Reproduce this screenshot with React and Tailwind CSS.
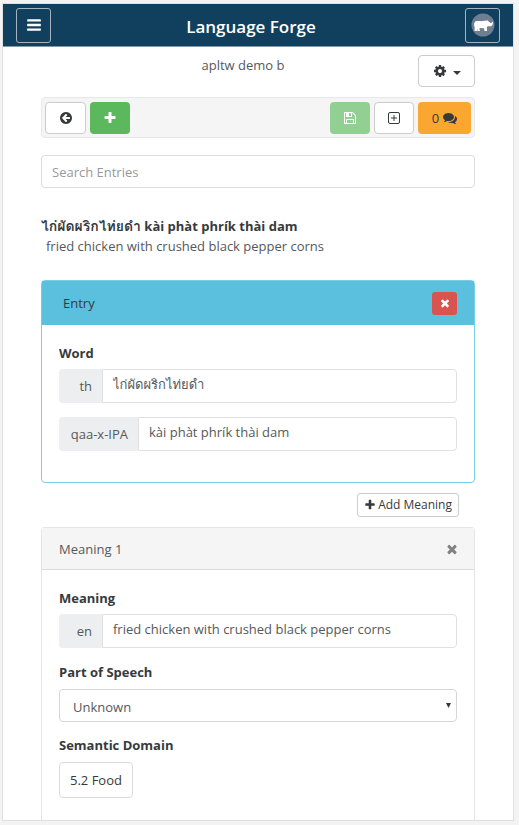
const ICONS = {
  plus: "M1600 736v192q0 40-28 68t-68 28h-416v416q0 40-28 68t-68 28h-192q-40 0-68-28t-28-68v-416h-416q-40 0-68-28t-28-68v-192q0-40 28-68t68-28h416v-416q0-40 28-68t68-28h192q40 0 68 28t28 68v416h416q40 0 68 28t28 68z",
  times: "M1490 1322q0 40-28 68l-136 136q-28 28-68 28t-68-28l-294-294-294 294q-28 28-68 28t-68-28l-136-136q-28-28-28-68t28-68l294-294-294-294q-28-28-28-68t28-68l136-136q28-28 68-28t68 28l294 294 294-294q28-28 68-28t68 28l136 136q28 28 28 68t-28 68l-294 294 294 294q28 28 28 68z",
  cog: "M1152 896q0-106-75-181t-181-75-181 75-75 181 75 181 181 75 181-75 75-181zm512-109v222q0 12-8 23t-20 13l-185 28q-19 54-39 91 35 50 107 138 10 12 10 25t-9 23q-27 37-99 108t-94 71q-12 0-26-9l-138-108q-44 23-91 38-16 136-29 186-7 28-36 28h-222q-14 0-24.5-8.5t-11.5-21.5l-28-184q-49-16-90-37l-141 107q-10 9-25 9-14 0-25-11-126-114-165-168-7-10-7-23 0-12 8-23 15-21 51-66.5t54-70.5q-27-50-41-99l-183-27q-13-2-21-12.5t-8-23.5v-222q0-12 8-23t19-13l186-28q14-46 39-92-40-57-107-138-10-12-10-24 0-10 9-23 26-36 98.5-107.5t94.5-71.5q13 0 26 10l138 107q44-23 91-38 16-136 29-186 7-28 36-28h222q14 0 24.5 8.5t11.5 21.5l28 184q49 16 90 37l142-107q9-9 24-9 13 0 25 10 129 119 165 170 7 8 7 22 0 12-8 23-15 21-51 66.5t-54 70.5q26 50 41 98l183 28q13 2 21 12.5t8 23.5z",
  save: "M512 1536h768v-384h-768v384zm896 0h128v-896q0-14-10-38.500t-20-34.500l-281-281q-10-10-34-20t-39-10v416q0 40-28 68t-68 28h-576q-40 0-68-28t-28-68v-416h-128v1280h128v-416q0-40 28-68t68-28h832q40 0 68 28t28 68v416zm-384-928v-320q0-13-9.500-22.500t-22.500-9.500h-192q-13 0-22.500 9.500t-9.500 22.500v320q0 13 9.500 22.500t22.500 9.500h192q13 0 22.500-9.500t9.500-22.500zm640 32v928q0 40-28 68t-68 28h-1344q-40 0-68-28t-28-68v-1344q0-40 28-68t68-28h928q40 0 88 20t76 48l280 280q28 28 48 76t20 88z",
  comments: "M1408 768q0 139-94 257t-256.500 186.500-353.500 68.500q-86 0-176-16-124 88-278 128-36 9-86 16h-3q-11 0-20.500-8t-11.500-21q-1-3-1-6.500t.5-6.500 2-6l2.500-5 3.500-5.500 4-5 4.500-5 4-4.500q5-6 23-25t26-29.500 22.500-29 25-38.500 20.500-44q-124-72-195-177t-71-224q0-139 94-257t256.500-186.500 353.500-68.500 353.500 68.500 256.500 186.500 94 257zm384 256q0 120-71 224.500t-195 176.500q10 24 20.500 44t25 38.500 22.500 29 26 29.500 23 25q1 1 4 4.500t4.500 5 4 5 3.500 5.500l2.500 5 2 6 .5 6.500-1 6.500q-3 14-13 22t-22 7q-50-7-86-16-154-40-278-128-90 16-176 16-271 0-472-132 58 4 88 4 161 0 309-45t264-129q125-92 192-212t67-254q0-77-23-152 129 71 204 178t75 230z",
  back: "M1408 960v-128q0-26-19-45t-45-19h-502l189-189q19-19 19-45t-19-45l-91-91q-18-18-45-18t-45 18l-362 362-91 91q-18 18-18 45t18 45l91 91 362 362q18 18 45 18t45-18l91-91q18-18 18-45t-18-45l-189-189h502q26 0 45-19t19-45zm256-64q0 209-103 385.500t-279.500 279.500-385.500 103-385.500-103-279.500-279.500-103-385.500 103-385.500 279.500-279.500 385.500-103 385.500 103 279.500 279.500 103 385.500z",
  bars: "M1664 1344v128q0 26-19 45t-45 19h-1408q-26 0-45-19t-19-45v-128q0-26 19-45t45-19h1408q26 0 45 19t19 45zm0-512v128q0 26-19 45t-45 19h-1408q-26 0-45-19t-19-45v-128q0-26 19-45t45-19h1408q26 0 45 19t19 45zm0-512v128q0 26-19 45t-45 19h-1408q-26 0-45-19t-19-45v-128q0-26 19-45t45-19h1408q26 0 45 19t19 45z",
};

function Icon({ name, className = "size-4" }) {
  return (
    <svg viewBox="0 0 1792 1792" fill="currentColor" aria-hidden="true" className={className}>
      <path d={ICONS[name]} />
    </svg>
  );
}

function RhinoAvatar() {
  return (
    <svg viewBox="0 0 24 24" aria-hidden="true" className="size-6">
      <circle cx="12" cy="12" r="11.500" fill="#6f7f92" />
      <path
        fill="#fff"
        d="M3 12C3 9.500 4 8.200 6 8C8 7.700 10 8.400 12 8L15 7.600L16 8L16.800 7L17.500 8.500L20 10.300L21.800 8.600C22.300 10.800 21.500 12.600 20 13.200L17 13.300L15.800 14L16 18H13.500L13 15.200L8.500 15L8.800 18H6.500L6.200 15.500L5.800 18H3.500L3.700 14.500Z"
      />
    </svg>
  );
}

function PlusSquare() {
  return (
    <svg viewBox="0 0 12 12" fill="none" stroke="currentColor" aria-hidden="true" className="size-3">
      <rect x=".5" y=".5" width="11" height="11" rx="1.500" />
      <path d="M6 3v6M3 6h6" />
    </svg>
  );
}

function LanguageField({ id, lang, value, wide }) {
  return (
    <div className="flex h-[34px]">
      <label
        htmlFor={id}
        className={
          "flex shrink-0 items-center justify-end rounded-l bg-[#eceeef] pr-2.5 text-[#55595c] " +
          (wide ? "w-[79px]" : "w-[43px]")
        }
      >
        {lang}
      </label>
      <input
        id={id}
        defaultValue={value}
        className="min-w-0 flex-1 rounded-r border border-[#e0e0e0] px-2.5 pb-1 text-[#55595c] outline-none"
      />
    </div>
  );
}

export default function App() {
  return (
    <div className="bg-[#f3f3f3] pt-[3px] pr-[5px] pb-1 pl-[2px] font-['Open_Sans','Noto_Sans','Loma','Garuda',sans-serif] text-[13px] leading-5 text-[#373a3c]">
      <div className="border border-[#e0e0e0] bg-white">
        <header className="flex h-[43px] items-center justify-between border-b border-[#8199a9] bg-[#11405f] px-[13px]">
          <button aria-label="Menu" className="flex size-[35px] items-center justify-center rounded-[3px] border border-[#a4b5c1] text-white">
            <Icon name="bars" />
          </button>
          <h1 className="flex-1 pt-1 pr-3.5 text-center text-[17px] font-semibold text-white">Language Forge</h1>
          <button aria-label="Account" className="flex size-[35px] items-center justify-center rounded-[3px] border border-[#a4b5c1]">
            <RhinoAvatar />
          </button>
        </header>

        <main className="px-[38px]">
          <div className="grid grid-cols-[1fr_auto_1fr] items-start pt-2">
            <p className="col-start-2 pr-[30px] text-[#55595c]">apltw demo b</p>
            <button aria-label="Settings" className="flex h-8 w-[57px] items-center justify-center gap-1.5 justify-self-end rounded border border-[#ccc]">
              <Icon name="cog" className="size-3.5" />
              <svg viewBox="0 0 8 4" fill="currentColor" aria-hidden="true" className="mt-1 h-1 w-2">
                <path d="M0 0h8L4 4z" />
              </svg>
            </button>
          </div>

          <div className="mt-2.5 flex h-[41px] items-center gap-1 rounded border border-[#e8e8e8] bg-[#f5f5f5] px-[3px]">
            <button aria-label="Back" className="flex h-8 w-[41px] items-center justify-center rounded border border-[#ccc] bg-white">
              <Icon name="back" className="size-3.5" />
            </button>
            <button aria-label="New entry" className="mr-auto flex h-8 w-10 items-center justify-center rounded bg-[#5cb85c] text-white">
              <Icon name="plus" className="size-3.5" />
            </button>
            <button aria-label="Save" className="flex h-8 w-10 items-center justify-center rounded bg-[#92cf92] text-white">
              <Icon name="save" className="size-3.5" />
            </button>
            <button aria-label="Expand" className="flex h-8 w-10 items-center justify-center rounded border border-[#ccc] bg-white">
              <PlusSquare />
            </button>
            <button aria-label="Comments" className="flex h-8 w-[53px] items-center justify-center gap-1 rounded bg-[#faa732]">
              0 <Icon name="comments" className="size-3.5" />
            </button>
          </div>

          <input
            type="search"
            aria-label="Search Entries"
            placeholder="Search Entries"
            className="mt-[17px] block h-[33px] w-full rounded border border-[#dcdcdc] px-2.5 outline-none placeholder:text-[#999]"
          />

          <div className="mt-7">
            <p className="font-bold">
              <span className="text-[14px]">ไก่ผัดผริกไท่ยดำ</span> kài phàt phrík thài dam
            </p>
            <p className="pl-[5px] text-[#55595c]">fried chicken with crushed black pepper corns</p>
          </div>

          <section className="mt-6 rounded border border-[#79cce3] pb-[31px]">
            <div className="flex h-11 items-center justify-between bg-[#5bc0de] pr-[17px] pl-[21px]">
              <h2>Entry</h2>
              <button aria-label="Delete entry" className="flex h-[23px] w-[25px] items-center justify-center rounded-[3px] bg-[#d9534f] text-white">
                <Icon name="times" className="size-3" />
              </button>
            </div>
            <div className="px-[17px] pt-[18px]">
              <h3 className="mb-1.5 font-bold">Word</h3>
              <div className="flex flex-col gap-3.5">
                <LanguageField id="word-th" lang="th" value="ไก่ผัดผริกไท่ยดำ" />
                <LanguageField id="word-ipa" lang="qaa-x-IPA" value="kài phàt phrík thài dam" wide />
              </div>
            </div>
          </section>

          <div className="flex justify-end py-2.5 pr-4">
            <button className="flex h-6 items-center gap-0.5 rounded-[3px] border border-[#ccc] px-1.5 text-[12px]">
              <Icon name="plus" className="size-3" />
              Add Meaning
            </button>
          </div>

          <section className="rounded-t border border-b-0 border-[#e5e5e5] pb-[22px]">
            <div className="flex h-[42px] items-center justify-between border-b border-[#dcdcdc] bg-[#f5f5f5] pr-[15px] pl-[17px]">
              <h2 className="text-[#55595c]">Meaning 1</h2>
              <button aria-label="Delete meaning" className="text-[#818181]">
                <Icon name="times" className="size-3.5" />
              </button>
            </div>
            <div className="px-[17px] pt-[18px]">
              <h3 className="mb-1.5 font-bold">Meaning</h3>
              <LanguageField id="meaning-en" lang="en" value="fried chicken with crushed black pepper corns" />
              <label htmlFor="pos" className="mt-3.5 mb-[7px] block font-bold">Part of Speech</label>
              <div className="relative">
                <select id="pos" className="block h-[33px] w-full appearance-none rounded border border-[#d6d6d6] bg-white px-[13px] pt-0.5 text-[#55595c]">
                  <option>Unknown</option>
                </select>
                <svg viewBox="0 0 6 6" fill="currentColor" aria-hidden="true" className="pointer-events-none absolute top-3.5 right-1.5 size-[5px]">
                  <path d="M0 0h6L3 6z" />
                </svg>
              </div>
              <h3 className="mt-[13px] mb-[7px] font-bold">Semantic Domain</h3>
              <button className="h-9 rounded border border-[#dcdcdc] px-2.5">5.2 Food</button>
            </div>
          </section>
        </main>
      </div>
    </div>
  );
}
